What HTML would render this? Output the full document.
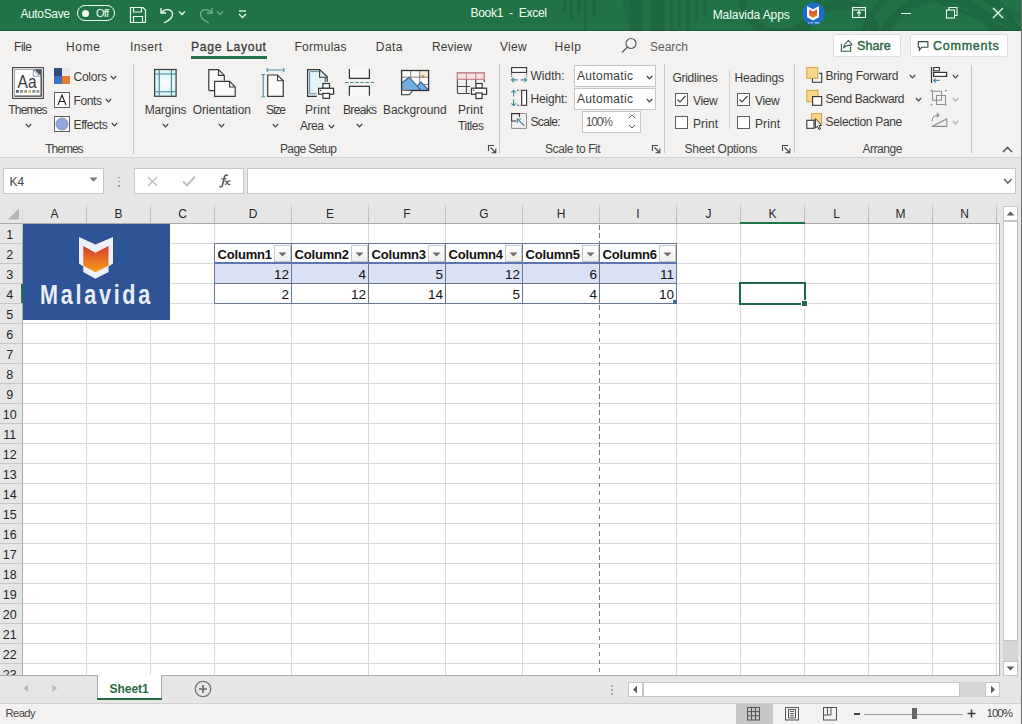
<!DOCTYPE html><html><head><meta charset="utf-8"><style>
html,body{margin:0;padding:0;width:1022px;height:724px;overflow:hidden;background:#fff;}
body{position:relative;font-family:"Liberation Sans",sans-serif;}
.t{position:absolute;white-space:nowrap;line-height:1;}
svg{overflow:visible;}
</style></head><body>
<div style="position:absolute;left:0px;top:0px;width:1022px;height:31px;background:#217346;"></div>
<div style="position:absolute;left:0px;top:30px;width:1022px;height:1px;background:#1f5e3c;"></div>
<svg style="position:absolute;left:540px;top:0px;" width="482" height="31" viewBox="0 0 482 31"><g fill="#000" opacity="0.09">
<rect x="23" y="0" width="3" height="13"/><rect x="30" y="0" width="3" height="19"/><rect x="37" y="0" width="4" height="14"/>
<rect x="44" y="0" width="3" height="31"/><rect x="52" y="0" width="4" height="17"/>
<path d="M82 0 H88 L103 27 V31 H90 Z" opacity="0.6"/>
<rect x="90" y="0" width="13" height="31"/><rect x="111" y="0" width="14" height="31"/>
<rect x="130" y="0" width="3" height="31"/><rect x="138" y="0" width="3" height="28"/><rect x="146" y="0" width="4" height="31"/>
<rect x="155" y="0" width="3" height="22"/><rect x="163" y="0" width="3" height="16"/>
</g>
<g fill="none" stroke="#000" opacity="0.08">
<circle cx="240" cy="-5" r="38" stroke-width="8"/>
<circle cx="300" cy="40" r="36" stroke-width="10"/>
<circle cx="400" cy="60" r="62" stroke-width="9"/>
<circle cx="400" cy="60" r="82" stroke-width="6"/>
<path d="M420 0 L482 31 M445 0 L482 18 M395 0 L470 31" stroke-width="4"/>
</g></svg>
<div class="t" style="left:20.40px;top:7.94px;font-size:12px;letter-spacing:-0.348px;color:#f0fff4;">AutoSave</div>
<div style="position:absolute;left:77px;top:5px;width:38px;height:16px;border:1.3px solid #eafff0;border-radius:9px;box-sizing:border-box;"></div>
<div style="position:absolute;left:81.5px;top:10px;width:7px;height:7px;background:#f4fff7;border-radius:50%;"></div>
<div class="t" style="left:96.00px;top:8.49px;font-size:11px;letter-spacing:-0.735px;color:#f0fff4;">Off</div>
<svg style="position:absolute;left:129px;top:6px;" width="18" height="18" viewBox="0 0 18 18"><g fill="none" stroke="#e8fbee" stroke-width="1.2"><path d="M1.5 1.5 H14 L16.5 4 V16.5 H1.5 Z"/><path d="M4.5 1.5 V6 H12.5 V1.5"/><path d="M4.5 16.5 V10.5 H13.5 V16.5"/></g></svg>
<svg style="position:absolute;left:158px;top:6px;" width="18" height="18" viewBox="0 0 18 18"><g fill="none" stroke="#e8fbee" stroke-width="1.3"><path d="M3 2 V7 H8"/><path d="M3.5 6.5 C7 2 14 3 14.5 8 C15 11 12 14 6 17"/></g></svg>
<svg style="position:absolute;left:178px;top:10px;" width="9" height="6" viewBox="0 0 9 6"><path d="M1 1.5 L4 4.5 L7 1.5" fill="none" stroke="#e8fbee" stroke-width="1.3"/></svg>
<svg style="position:absolute;left:197px;top:6px;" width="18" height="18" viewBox="0 0 18 18"><g fill="none" stroke="#6fae8a" stroke-width="1.3"><path d="M15 2 V7 H10"/><path d="M14.5 6.5 C11 2 4 3 3.5 8 C3 11 6 14 12 17"/></g></svg>
<svg style="position:absolute;left:216px;top:10px;" width="9" height="6" viewBox="0 0 9 6"><path d="M1 1.5 L4 4.5 L7 1.5" fill="none" stroke="#6fae8a" stroke-width="1.3"/></svg>
<svg style="position:absolute;left:237px;top:9px;" width="11" height="10" viewBox="0 0 11 10"><g fill="none" stroke="#e8fbee" stroke-width="1.3"><path d="M2 2 H9"/><path d="M2 5 L5.5 8.5 L9 5"/></g></svg>
<div class="t" style="left:470.50px;top:6.94px;font-size:12px;letter-spacing:-0.300px;color:#f0fff4;">Book1  -  Excel</div>
<div class="t" style="left:712.70px;top:8.94px;font-size:12px;letter-spacing:-0.079px;color:#f0fff4;">Malavida Apps</div>
<svg style="position:absolute;left:801px;top:2px;" width="25" height="25" viewBox="0 0 25 25"><defs><linearGradient id="ag" x1="0" y1="0" x2="0" y2="1"><stop offset="0" stop-color="#c9452a"/><stop offset="1" stop-color="#f08a25"/></linearGradient></defs>
<circle cx="12.5" cy="11.8" r="11.4" fill="#1e6cc4"/>
<path d="M6 4 L12 7.3 L18 4 V15.3 L12 18.6 L6 15.3 Z" fill="#f4f6fb"/>
<path d="M8.2 7.6 L12 9.8 L16 7.6 V13.6 L12 16 L8.2 13.6 Z" fill="url(#ag)"/>
<rect x="7" y="20.4" width="1.2" height="1" fill="#cfe3ff"/><rect x="9.5" y="20.4" width="2.5" height="1" fill="#cfe3ff"/><rect x="13.5" y="20.4" width="5" height="1" fill="#cfe3ff"/></svg>
<svg style="position:absolute;left:852px;top:7px;" width="15" height="12" viewBox="0 0 15 12"><g fill="none" stroke="#f0fff4" stroke-width="1.1"><rect x="0.5" y="0.5" width="13" height="10"/><path d="M0.5 3 H13.5"/><path d="M7 9.5 V4.5 M5 6.5 L7 4.5 L9 6.5"/></g></svg>
<div style="position:absolute;left:901px;top:13px;width:10px;height:1.2px;background:#f0fff4;"></div>
<svg style="position:absolute;left:946px;top:7px;" width="12" height="12" viewBox="0 0 12 12"><g fill="none" stroke="#f0fff4" stroke-width="1.1"><rect x="0.5" y="3" width="8" height="8"/><path d="M3 3 V0.5 H11 V8.5 H8.5"/></g></svg>
<svg style="position:absolute;left:992px;top:7px;" width="12" height="12" viewBox="0 0 12 12"><g stroke="#f0fff4" stroke-width="1.2"><path d="M1 1 L11 11 M11 1 L1 11"/></g></svg>
<div style="position:absolute;left:0px;top:31px;width:1022px;height:127px;background:#f3f2f1;"></div>
<div class="t" style="left:14.00px;top:40.64px;font-size:12px;letter-spacing:-0.445px;color:#3b3a39;">File</div>
<div class="t" style="left:66.00px;top:40.64px;font-size:12px;letter-spacing:0.663px;color:#3b3a39;">Home</div>
<div class="t" style="left:130.00px;top:40.64px;font-size:12px;letter-spacing:0.398px;color:#3b3a39;">Insert</div>
<div class="t" style="left:294.40px;top:40.64px;font-size:12px;letter-spacing:0.313px;color:#3b3a39;">Formulas</div>
<div class="t" style="left:375.80px;top:40.64px;font-size:12px;letter-spacing:0.451px;color:#3b3a39;">Data</div>
<div class="t" style="left:432.00px;top:40.64px;font-size:12px;letter-spacing:0.131px;color:#3b3a39;">Review</div>
<div class="t" style="left:500.00px;top:40.64px;font-size:12px;letter-spacing:0.269px;color:#3b3a39;">View</div>
<div class="t" style="left:554.60px;top:40.64px;font-size:12px;letter-spacing:0.573px;color:#3b3a39;">Help</div>
<div class="t" style="left:191.00px;top:40.97px;font-size:12.2px;letter-spacing:0.656px;color:#3b3a39;-webkit-text-stroke:0.3px #3b3a39;">Page Layout</div>
<div style="position:absolute;left:191px;top:56px;width:76px;height:3px;background:#28704a;"></div>
<svg style="position:absolute;left:620px;top:37px;" width="18" height="18" viewBox="0 0 18 18"><g fill="none" stroke="#605e5c" stroke-width="1.2"><circle cx="11" cy="6.5" r="5"/><path d="M7.5 10 L2 15.5"/></g></svg>
<div class="t" style="left:650.00px;top:40.64px;font-size:12px;letter-spacing:-0.004px;color:#605e5c;">Search</div>
<div style="position:absolute;left:833px;top:34px;width:68px;height:23px;background:#fff;border:1px solid #e1dfdd;border-radius:2px;box-sizing:border-box;"></div>
<svg style="position:absolute;left:836px;top:36px;" width="20" height="20" viewBox="0 0 20 20"><g fill="none" stroke="#2f5f45" stroke-width="1.1"><path d="M5.4 8 V15.3 H14.6 V11"/><path d="M7.6 11.5 C8.3 8.5 10 6.2 12.3 5.3 L12 4.2 L15.8 8.2 L14.3 9.8 L13.8 9.1 C11.5 9.3 9.5 9.8 7.6 11.5 Z"/></g></svg>
<div class="t" style="left:857.00px;top:40.42px;font-size:12.5px;letter-spacing:0.086px;color:#2b6a45;-webkit-text-stroke:0.45px #2b6a45;">Share</div>
<div style="position:absolute;left:910px;top:34px;width:98px;height:23px;background:#fff;border:1px solid #e1dfdd;border-radius:2px;box-sizing:border-box;"></div>
<svg style="position:absolute;left:912px;top:36px;" width="20" height="20" viewBox="0 0 20 20"><path d="M6.3 5.6 H15.9 V11.2 H9.8 L7.4 14.2 V11.2 H6.3 Z" fill="none" stroke="#2f4f3f" stroke-width="1.1"/></svg>
<div class="t" style="left:933.00px;top:40.42px;font-size:12.5px;letter-spacing:0.767px;color:#2b6a45;-webkit-text-stroke:0.45px #2b6a45;">Comments</div>
<div style="position:absolute;left:0px;top:157px;width:1022px;height:1px;background:#d6d4d2;"></div>
<div style="position:absolute;left:133px;top:64px;width:1px;height:90px;background:#c8c6c4;"></div>
<div style="position:absolute;left:499px;top:64px;width:1px;height:89px;background:#c8c6c4;"></div>
<div style="position:absolute;left:664px;top:64px;width:1px;height:89px;background:#c8c6c4;"></div>
<div style="position:absolute;left:794px;top:64px;width:1px;height:89px;background:#c8c6c4;"></div>
<div style="position:absolute;left:971px;top:65px;width:1px;height:88px;background:#c8c6c4;"></div>
<div style="position:absolute;left:729px;top:70px;width:1px;height:59px;background:#d2d0ce;"></div>
<div class="t" style="left:45.30px;top:142.64px;font-size:12px;letter-spacing:-1.010px;color:#444;">Themes</div>
<div class="t" style="left:280.00px;top:142.94px;font-size:12px;letter-spacing:-0.635px;color:#444;">Page Setup</div>
<div class="t" style="left:545.00px;top:142.94px;font-size:12px;letter-spacing:-0.393px;color:#444;">Scale to Fit</div>
<div class="t" style="left:684.60px;top:142.64px;font-size:12px;letter-spacing:-0.279px;color:#444;">Sheet Options</div>
<div class="t" style="left:862.40px;top:142.94px;font-size:12px;letter-spacing:-0.449px;color:#444;">Arrange</div>
<svg style="position:absolute;left:487.5px;top:144.5px;" width="9" height="9" viewBox="0 0 9 9"><g fill="none" stroke="#444" stroke-width="1.1"><path d="M0.5 6 V0.5 H6"/><path d="M2.5 2.5 L7.5 7.5 M3.5 7.8 H7.8 V3.5"/></g></svg>
<svg style="position:absolute;left:651.5px;top:144.5px;" width="9" height="9" viewBox="0 0 9 9"><g fill="none" stroke="#444" stroke-width="1.1"><path d="M0.5 6 V0.5 H6"/><path d="M2.5 2.5 L7.5 7.5 M3.5 7.8 H7.8 V3.5"/></g></svg>
<svg style="position:absolute;left:782px;top:144.5px;" width="9" height="9" viewBox="0 0 9 9"><g fill="none" stroke="#444" stroke-width="1.1"><path d="M0.5 6 V0.5 H6"/><path d="M2.5 2.5 L7.5 7.5 M3.5 7.8 H7.8 V3.5"/></g></svg>
<svg style="position:absolute;left:1002px;top:146px;" width="11" height="7" viewBox="0 0 11 7"><path d="M1 6 L5.5 1.5 L10 6" fill="none" stroke="#444" stroke-width="1.3"/></svg>
<svg style="position:absolute;left:12px;top:67px;" width="32" height="32" viewBox="0 0 32 32"><rect x="0.6" y="0.6" width="30.8" height="30.8" fill="#fff" stroke="#4a4a4a" stroke-width="1.2"/>
<path d="M2.6 29.5 V2.6 H29.4" fill="none" stroke="#9a9a9a" stroke-width="0.9"/>
<path d="M2.6 29.2 H29.2 V9" fill="none" stroke="#3a3a3a" stroke-width="1.3"/>
<path d="M22 2.2 H29.8 V10 Z" fill="#4b5568"/>
<path d="M21.4 3 V9.2 H27.4 Z" fill="#fff" stroke="#4b5568" stroke-width="0.6"/>
<text x="5.6" y="20.8" font-family="Liberation Sans" font-size="17.5" fill="#3b3a39" textLength="19" lengthAdjust="spacingAndGlyphs">Aa</text>
<rect x="4.0" y="23" width="2.8" height="2.8" fill="#4f5b86"/><rect x="8.1" y="23" width="2.8" height="2.8" fill="#9a8a74"/><rect x="12.2" y="23" width="2.8" height="2.8" fill="#a39b87"/><rect x="16.3" y="23" width="2.8" height="2.8" fill="#c9c07a"/><rect x="20.4" y="23" width="2.8" height="2.8" fill="#7f9590"/><rect x="24.5" y="23" width="2.8" height="2.8" fill="#93a08c"/></svg>
<div class="t" style="left:8.30px;top:104.04px;font-size:12px;letter-spacing:-0.810px;color:#3b3a39;">Themes</div>
<svg style="position:absolute;left:24.5px;top:123px;" width="7" height="5" viewBox="0 0 7 5"><path d="M0.8 1 L3.5 3.8 L6.2 1" fill="none" stroke="#444" stroke-width="1.2"/></svg>
<svg style="position:absolute;left:54px;top:68px;" width="16" height="16" viewBox="0 0 16 16"><rect x="0" y="0" width="8" height="8" fill="#2f4a7a"/><rect x="8" y="0" width="8" height="8" fill="#e8e8e8"/><rect x="0" y="8" width="8" height="8" fill="#3d72c0"/><rect x="8" y="8" width="8" height="8" fill="#e8782f"/></svg>
<div class="t" style="left:73.50px;top:71.14px;font-size:12px;letter-spacing:-0.235px;color:#3b3a39;">Colors</div>
<svg style="position:absolute;left:110px;top:74.5px;" width="7" height="5" viewBox="0 0 7 5"><path d="M0.8 1 L3.5 3.8 L6.2 1" fill="none" stroke="#444" stroke-width="1.2"/></svg>
<svg style="position:absolute;left:54px;top:92px;" width="16" height="16" viewBox="0 0 16 16"><rect x="0.5" y="0.5" width="15" height="15" fill="#fff" stroke="#605e5c"/><path d="M4 13 L8 3 L12 13 M5.5 9.5 H10.5" fill="none" stroke="#222" stroke-width="1.1"/></svg>
<div class="t" style="left:73.50px;top:95.04px;font-size:12px;letter-spacing:-0.378px;color:#3b3a39;">Fonts</div>
<svg style="position:absolute;left:105px;top:98px;" width="7" height="5" viewBox="0 0 7 5"><path d="M0.8 1 L3.5 3.8 L6.2 1" fill="none" stroke="#444" stroke-width="1.2"/></svg>
<svg style="position:absolute;left:54px;top:116px;" width="16" height="16" viewBox="0 0 16 16"><rect x="0.5" y="0.5" width="15" height="15" fill="#fff" stroke="#605e5c"/><circle cx="8" cy="8" r="6" fill="#8eaadb" stroke="#6f87b9" stroke-width="0.8"/></svg>
<div class="t" style="left:73.50px;top:118.74px;font-size:12px;letter-spacing:-0.377px;color:#3b3a39;">Effects</div>
<svg style="position:absolute;left:111px;top:121.5px;" width="7" height="5" viewBox="0 0 7 5"><path d="M0.8 1 L3.5 3.8 L6.2 1" fill="none" stroke="#444" stroke-width="1.2"/></svg>
<svg style="position:absolute;left:145px;top:62px;" width="150" height="40" viewBox="0 0 150 40"><defs><radialGradient id="mg" cx="0.5" cy="0.5" r="0.6"><stop offset="0" stop-color="#fbfdfd"/><stop offset="1" stop-color="#d6eff4"/></radialGradient></defs>
<rect x="9.6" y="7.5" width="21.5" height="26.8" fill="url(#mg)" stroke="#3a3a3a" stroke-width="1.2"/>
<path d="M14.2 8 V34 M26.4 8 V34 M10 12 H31 M10 29.7 H31" stroke="#3f8796" stroke-width="1.1"/>
<path d="M63.8 28.6 V7.6 H73.5 L79.3 13.4 V18.8" fill="#fafafa" stroke="#3a3a3a" stroke-width="1.2"/>
<path d="M73.5 7.6 V13.4 H79.3" fill="none" stroke="#3a3a3a" stroke-width="1.1"/>
<path d="M63.8 28.6 H69" stroke="#3a3a3a" stroke-width="1.2"/>
<path d="M69.6 34.3 V19.4 H84.6 L90.2 25 V34.3 Z" fill="#fafafa" stroke="#3a3a3a" stroke-width="1.2"/>
<path d="M84.6 19.4 V25 H90.2" fill="none" stroke="#3a3a3a" stroke-width="1.1"/>
<path d="M122.2 8 H138.8 M122.2 6 V10 M138.8 6 V10" stroke="#4a8f9e" stroke-width="1.1"/>
<path d="M118.2 12.5 V34.8 M116.2 12.5 H120.2 M116.2 34.8 H120.2" stroke="#4a8f9e" stroke-width="1.1"/>
<path d="M122.7 34.3 V13 H132.5 L138.3 18.8 V34.3 Z" fill="#fafafa" stroke="#3a3a3a" stroke-width="1.2"/>
<path d="M132.5 13 V18.8 H138.3" fill="none" stroke="#3a3a3a" stroke-width="1.1"/></svg>
<div class="t" style="left:144.70px;top:103.84px;font-size:12px;letter-spacing:-0.163px;color:#3b3a39;">Margins</div>
<svg style="position:absolute;left:162px;top:123px;" width="7" height="5" viewBox="0 0 7 5"><path d="M0.8 1 L3.5 3.8 L6.2 1" fill="none" stroke="#444" stroke-width="1.2"/></svg>
<div class="t" style="left:192.80px;top:103.84px;font-size:12px;letter-spacing:-0.050px;color:#3b3a39;">Orientation</div>
<svg style="position:absolute;left:218px;top:123px;" width="7" height="5" viewBox="0 0 7 5"><path d="M0.8 1 L3.5 3.8 L6.2 1" fill="none" stroke="#444" stroke-width="1.2"/></svg>
<div class="t" style="left:266.00px;top:103.84px;font-size:12px;letter-spacing:-1.115px;color:#3b3a39;">Size</div>
<svg style="position:absolute;left:271.5px;top:123px;" width="7" height="5" viewBox="0 0 7 5"><path d="M0.8 1 L3.5 3.8 L6.2 1" fill="none" stroke="#444" stroke-width="1.2"/></svg>
<svg style="position:absolute;left:300px;top:62px;" width="80" height="40" viewBox="0 0 80 40"><path d="M8 34 V8 H19.4 L27 15.3 V32 H8 Z" fill="#e4f3f8" stroke="none"/>
<path d="M16.8 34.4 H7.6 V7.6 H19.6 L27.2 14.8 V19.8" fill="none" stroke="#333" stroke-width="1.2"/>
<path d="M16.4 31.8 H9.6 V9.6 H18.8" fill="none" stroke="#5d8ea3" stroke-width="1"/>
<path d="M19.6 7.8 V15.3 H27" fill="none" stroke="#333" stroke-width="1.1"/>
<path d="M25.2 15.8 V20" stroke="#333" stroke-width="0.9"/>
<rect x="22.9" y="21.5" width="6.6" height="4.8" fill="#fff" stroke="#333" stroke-width="1.2"/>
<rect x="18.6" y="26.3" width="15" height="5.9" fill="#fff" stroke="#333" stroke-width="1.2"/>
<rect x="22.9" y="31.4" width="6.6" height="4.9" fill="#fff" stroke="#333" stroke-width="1.2"/>
<rect x="20" y="27.8" width="1.2" height="1.2" fill="#333"/>
<path d="M49.4 7 V16.4 H69.4 V7" fill="#f7f7f7" stroke="#333" stroke-width="1.2"/>
<path d="M45 20.5 H74" stroke="#4a8f9e" stroke-width="1.2" stroke-dasharray="3.5 1.6"/>
<path d="M49.4 33.8 V24.4 H69.4 V33.8" fill="#f7f7f7" stroke="#333" stroke-width="1.2"/></svg>
<div class="t" style="left:305.00px;top:103.94px;font-size:12px;letter-spacing:0.082px;color:#3b3a39;">Print</div>
<div class="t" style="left:300.00px;top:120.14px;font-size:12px;letter-spacing:-0.449px;color:#3b3a39;">Area</div>
<svg style="position:absolute;left:327.5px;top:124px;" width="7" height="5" viewBox="0 0 7 5"><path d="M0.8 1 L3.5 3.8 L6.2 1" fill="none" stroke="#444" stroke-width="1.2"/></svg>
<div class="t" style="left:343.00px;top:103.94px;font-size:12px;letter-spacing:-0.670px;color:#3b3a39;">Breaks</div>
<svg style="position:absolute;left:356px;top:123px;" width="7" height="5" viewBox="0 0 7 5"><path d="M0.8 1 L3.5 3.8 L6.2 1" fill="none" stroke="#444" stroke-width="1.2"/></svg>
<svg style="position:absolute;left:395px;top:62px;" width="100" height="40" viewBox="0 0 100 40"><rect x="6.4" y="8.3" width="27.4" height="20.3" fill="#fdfdfd" stroke="none"/>
<rect x="24.7" y="8.3" width="9.1" height="6.9" fill="#f6ead6"/>
<path d="M7 15.2 H33.5 M15.7 8.5 V15.2 M24.7 8.5 V28 M24.7 22.5 H33.5" stroke="#777" stroke-width="0.9"/>
<circle cx="27.9" cy="14.7" r="1.6" fill="#b8925a"/>
<path d="M6.8 21 L14.2 15.2 L25.9 28.4 H6.8 Z" fill="#74aee0"/>
<path d="M22 24 L25.9 20 L32.8 27 V28.4 H25.9 Z" fill="#74aee0"/>
<path d="M6.8 21 L14.2 15.2 L25.9 28.4 M22.5 23.6 L25.9 20 L33.4 27.8" fill="none" stroke="#2f5f8a" stroke-width="1.1"/>
<rect x="6.6" y="8.5" width="27" height="20" fill="none" stroke="#333" stroke-width="1.3"/>
<path d="M6.6 28.6 V32.8 H14.3 L17.2 29" fill="#fff" stroke="#333" stroke-width="1.1"/>
<rect x="62.4" y="10.6" width="27" height="6.9" fill="#f9dfe0"/>
<path d="M62.4 31.5 V10.6 H89.4 V20" fill="none" stroke="#444" stroke-width="1.1"/>
<path d="M62.4 10.6 H89.4 V17.4 H62.4 Z M71.4 10.6 V17.4 M80.7 10.6 V17.4" fill="none" stroke="#c98b8f" stroke-width="1.1"/>
<path d="M62.4 31.5 H75 M62.4 24.5 H75 M71.4 17.4 V31.5 M80.7 17.4 V21" fill="none" stroke="#444" stroke-width="1.1"/>
<rect x="80.9" y="21.5" width="6.2" height="4.7" fill="#fff" stroke="#333" stroke-width="1.2"/>
<rect x="76.5" y="26.2" width="15.1" height="6.1" fill="#fff" stroke="#333" stroke-width="1.2"/>
<rect x="80.9" y="31" width="6.2" height="5.5" fill="#fff" stroke="#333" stroke-width="1.2"/>
<rect x="78" y="27.8" width="1.2" height="1.2" fill="#333"/></svg>
<div class="t" style="left:383.00px;top:103.94px;font-size:12px;letter-spacing:-0.049px;color:#3b3a39;">Background</div>
<div class="t" style="left:458.00px;top:103.94px;font-size:12px;letter-spacing:0.082px;color:#3b3a39;">Print</div>
<div class="t" style="left:458.00px;top:120.14px;font-size:12px;letter-spacing:-0.445px;color:#3b3a39;">Titles</div>
<svg style="position:absolute;left:506px;top:62px;" width="26" height="70" viewBox="0 0 26 70"><rect x="5.6" y="5.6" width="15" height="4.8" fill="#fff" stroke="#333" stroke-width="1.1"/>
<path d="M5.6 11.5 V15 M20.6 11.5 V15" stroke="#333" stroke-width="1" stroke-dasharray="1.6 1.2"/>
<path d="M5.5 17.9 H11.5 M7.8 15.6 L5.5 17.9 L7.8 20.2 M14.7 17.9 H20.7 M18.4 15.6 L20.7 17.9 L18.4 20.2" fill="none" stroke="#4a8a9e" stroke-width="1.1"/></svg>
<div class="t" style="left:530.50px;top:70.14px;font-size:12px;letter-spacing:-0.002px;color:#3b3a39;">Width:</div>
<svg style="position:absolute;left:506px;top:62px;" width="26" height="70" viewBox="0 0 26 70"><rect x="15.7" y="28.3" width="4.9" height="15" fill="#fff" stroke="#333" stroke-width="1.1"/>
<path d="M11 28.3 H14.5 M11 43.3 H14.5" stroke="#333" stroke-width="1" stroke-dasharray="1.6 1.2"/>
<path d="M7.6 28.4 V34.6 M5.3 30.7 L7.6 28.4 L9.9 30.7 M7.6 37.6 V43.6 M5.3 41.3 L7.6 43.6 L9.9 41.3" fill="none" stroke="#4a8a9e" stroke-width="1.1"/></svg>
<div class="t" style="left:530.50px;top:93.14px;font-size:12px;letter-spacing:-0.170px;color:#3b3a39;">Height:</div>
<svg style="position:absolute;left:506px;top:62px;" width="26" height="70" viewBox="0 0 26 70"><path d="M13.5 51.6 H20.5 V66.4 H5.6 V59" fill="none" stroke="#8a8a8a" stroke-width="1"/>
<path d="M5.6 59 V51.6 H13.5 V55" fill="none" stroke="#333" stroke-width="1.1"/><path d="M5.6 59 H10" stroke="#333" stroke-width="1.1"/>
<path d="M18.4 63.8 L11.3 57 M11.2 61 V57 H15.2" fill="none" stroke="#4a8a9e" stroke-width="1.2"/></svg>
<div class="t" style="left:530.50px;top:115.84px;font-size:12px;letter-spacing:-0.670px;color:#3b3a39;">Scale:</div>
<div style="position:absolute;left:574px;top:65px;width:82px;height:22px;background:#fff;border:1px solid #c8c6c4;box-sizing:border-box;"></div>
<div class="t" style="left:577.00px;top:70.14px;font-size:12px;letter-spacing:0.331px;color:#3b3a39;">Automatic</div>
<svg style="position:absolute;left:646px;top:75px;" width="7" height="5" viewBox="0 0 7 5"><path d="M0.8 1 L3.5 3.8 L6.2 1" fill="none" stroke="#444" stroke-width="1.2"/></svg>
<div style="position:absolute;left:574px;top:88px;width:82px;height:22px;background:#fff;border:1px solid #c8c6c4;box-sizing:border-box;"></div>
<div class="t" style="left:577.00px;top:93.14px;font-size:12px;letter-spacing:0.331px;color:#3b3a39;">Automatic</div>
<svg style="position:absolute;left:646px;top:98px;" width="7" height="5" viewBox="0 0 7 5"><path d="M0.8 1 L3.5 3.8 L6.2 1" fill="none" stroke="#444" stroke-width="1.2"/></svg>
<div style="position:absolute;left:582px;top:111px;width:59px;height:22px;background:#fff;border:1px solid #c8c6c4;box-sizing:border-box;"></div>
<div class="t" style="left:585.70px;top:115.84px;font-size:12px;letter-spacing:-1.130px;color:#555;">100%</div>
<svg style="position:absolute;left:628px;top:113px;" width="8" height="17" viewBox="0 0 8 17"><path d="M1 5 L4 2 L7 5 M1 12 L4 15 L7 12" fill="none" stroke="#605e5c" stroke-width="1"/></svg>
<div class="t" style="left:672.40px;top:71.54px;font-size:12px;letter-spacing:-0.256px;color:#3b3a39;">Gridlines</div>
<div class="t" style="left:734.60px;top:71.54px;font-size:12px;letter-spacing:-0.186px;color:#3b3a39;">Headings</div>
<svg style="position:absolute;left:675px;top:93px;" width="13" height="13" viewBox="0 0 13 13"><rect x="0.5" y="0.5" width="12" height="12" fill="#fff" stroke="#605e5c"/><path d="M2.5 6.5 L5 9 L10.5 3" fill="none" stroke="#444" stroke-width="1.2"/></svg>
<svg style="position:absolute;left:675px;top:116px;" width="13" height="13" viewBox="0 0 13 13"><rect x="0.5" y="0.5" width="12" height="12" fill="#fff" stroke="#605e5c"/></svg>
<svg style="position:absolute;left:737px;top:93px;" width="13" height="13" viewBox="0 0 13 13"><rect x="0.5" y="0.5" width="12" height="12" fill="#fff" stroke="#605e5c"/><path d="M2.5 6.5 L5 9 L10.5 3" fill="none" stroke="#444" stroke-width="1.2"/></svg>
<svg style="position:absolute;left:737px;top:116px;" width="13" height="13" viewBox="0 0 13 13"><rect x="0.5" y="0.5" width="12" height="12" fill="#fff" stroke="#605e5c"/></svg>
<div class="t" style="left:693.00px;top:94.64px;font-size:12px;letter-spacing:-0.364px;color:#3b3a39;">View</div>
<div class="t" style="left:693.00px;top:117.84px;font-size:12px;letter-spacing:0.082px;color:#3b3a39;">Print</div>
<div class="t" style="left:755.00px;top:94.64px;font-size:12px;letter-spacing:-0.364px;color:#3b3a39;">View</div>
<div class="t" style="left:755.00px;top:117.84px;font-size:12px;letter-spacing:0.082px;color:#3b3a39;">Print</div>
<svg style="position:absolute;left:802px;top:62px;" width="26" height="70" viewBox="0 0 26 70"><rect x="4.8" y="5.6" width="11" height="10.6" fill="#f9d58a" stroke="#d5a04a" stroke-width="1"/>
<path d="M17.2 11.4 H19.7 V20.2 H10.4 V16.6" fill="none" stroke="#333" stroke-width="1.1"/>
<rect x="4.8" y="28.4" width="11.2" height="11.4" fill="#f9d58a" stroke="#d5a04a" stroke-width="1"/>
<rect x="10.6" y="34.6" width="9.1" height="8.7" fill="#fff" stroke="#333" stroke-width="1.1"/>
<rect x="9.6" y="51.6" width="10" height="10.2" fill="#f9d58a" stroke="#d5a04a" stroke-width="1"/>
<rect x="4.8" y="58.3" width="7.2" height="8" fill="#fff" stroke="#333" stroke-width="1.1"/>
<path d="M13.4 56.6 V66.2 L15.4 64.2 L17 67.6 L18.5 66.9 L17 63.6 L19.6 63.4 Z" fill="#fff" stroke="#333" stroke-width="1"/></svg>
<div class="t" style="left:825.50px;top:70.14px;font-size:12px;letter-spacing:-0.196px;color:#3b3a39;">Bring Forward</div>
<svg style="position:absolute;left:909px;top:74px;" width="7" height="5" viewBox="0 0 7 5"><path d="M0.8 1 L3.5 3.8 L6.2 1" fill="none" stroke="#444" stroke-width="1.2"/></svg>
<div class="t" style="left:825.50px;top:93.14px;font-size:12px;letter-spacing:-0.421px;color:#3b3a39;">Send Backward</div>
<svg style="position:absolute;left:914.5px;top:97px;" width="7" height="5" viewBox="0 0 7 5"><path d="M0.8 1 L3.5 3.8 L6.2 1" fill="none" stroke="#444" stroke-width="1.2"/></svg>
<div class="t" style="left:825.50px;top:115.84px;font-size:12px;letter-spacing:-0.302px;color:#3b3a39;">Selection Pane</div>
<svg style="position:absolute;left:926px;top:62px;" width="36" height="70" viewBox="0 0 36 70"><path d="M5.5 5 V21" stroke="#333" stroke-width="1.2"/>
<rect x="7.6" y="5.6" width="5.8" height="3.2" fill="#fff" stroke="#333" stroke-width="1.1"/>
<rect x="7.6" y="10.4" width="13" height="4" fill="#fff" stroke="#333" stroke-width="1.2"/>
<path d="M13.6 18.4 H7.6 M9.8 16.3 L7.6 18.4 L9.8 20.5" fill="none" stroke="#4a8a9e" stroke-width="1.1"/>
<g fill="none" stroke="#8f8d8b" stroke-width="1"><rect x="6.5" y="29.2" width="9" height="9"/><rect x="10.5" y="33.5" width="9" height="9"/></g>
<g fill="#8f8d8b"><rect x="4.6" y="27.8" width="1.6" height="1.6"/><rect x="19" y="27.8" width="1.6" height="1.6"/><rect x="4.6" y="41.9" width="1.6" height="1.6"/><rect x="19" y="41.9" width="1.6" height="1.6"/></g>
<g fill="none" stroke="#8f8d8b" stroke-width="1.1"><path d="M5.8 64.4 H20.8 V57 Z"/><path d="M6.3 59.2 C6 55.5 8.5 53 12.2 53.2 M10.8 51 L13 53.2 L10.8 55.4"/></g></svg>
<svg style="position:absolute;left:951.5px;top:74px;" width="7" height="5" viewBox="0 0 7 5"><path d="M0.8 1 L3.5 3.8 L6.2 1" fill="none" stroke="#444" stroke-width="1.2"/></svg>
<svg style="position:absolute;left:951.5px;top:97px;" width="7" height="5" viewBox="0 0 7 5"><path d="M0.8 1 L3.5 3.8 L6.2 1" fill="none" stroke="#b3b0ad" stroke-width="1.2"/></svg>
<svg style="position:absolute;left:951.5px;top:120px;" width="7" height="5" viewBox="0 0 7 5"><path d="M0.8 1 L3.5 3.8 L6.2 1" fill="none" stroke="#b3b0ad" stroke-width="1.2"/></svg>
<div style="position:absolute;left:0px;top:158px;width:1022px;height:45px;background:#e6e6e6;"></div>
<div style="position:absolute;left:3px;top:168px;width:101px;height:26px;background:#fff;border:1px solid #c8c6c4;box-sizing:border-box;"></div>
<div class="t" style="left:9.60px;top:175.54px;font-size:12px;letter-spacing:0.000px;color:#444;">K4</div>
<svg style="position:absolute;left:89px;top:177px;" width="10" height="6" viewBox="0 0 10 6"><path d="M0.5 0.5 H8.5 L4.5 4.8 Z" fill="#777"/></svg>
<div style="position:absolute;left:118.3px;top:176.5px;width:1.6px;height:1.6px;background:#9a9a9a;"></div>
<div style="position:absolute;left:118.3px;top:180.8px;width:1.6px;height:1.6px;background:#9a9a9a;"></div>
<div style="position:absolute;left:118.3px;top:185px;width:1.6px;height:1.6px;background:#9a9a9a;"></div>
<div style="position:absolute;left:134px;top:168px;width:110px;height:26px;background:#fff;border:1px solid #c8c6c4;box-sizing:border-box;"></div>
<svg style="position:absolute;left:147px;top:176px;" width="11" height="11" viewBox="0 0 11 11"><path d="M1 1 L10 10 M10 1 L1 10" stroke="#bdbdbd" stroke-width="1.3"/></svg>
<svg style="position:absolute;left:182px;top:175px;" width="14" height="12" viewBox="0 0 14 12"><path d="M1 6.5 L5 10.5 L13 1.5" fill="none" stroke="#c0c0c0" stroke-width="2"/></svg>
<svg style="position:absolute;left:212px;top:170px;" width="26" height="22" viewBox="0 0 26 22"><path d="M15.8 5.6 C14.8 4.6 13 5 12.4 7 L10.4 15.5 C9.8 17.2 8.6 17.4 7.6 16.4" fill="none" stroke="#555" stroke-width="1.5"/><path d="M9.5 8.8 H14.3" stroke="#555" stroke-width="1.2"/><path d="M12.8 14.5 C14 14.6 14.5 14 15.2 12.5 C15.8 11.2 16.6 10.8 18.6 11 M12.6 11.2 C14.3 10.8 15 11.4 15.5 13 C16 14.4 16.8 14.8 18.2 14.4" fill="none" stroke="#555" stroke-width="1.2"/></svg>
<div style="position:absolute;left:247px;top:168px;width:769px;height:26px;background:#fff;border:1px solid #c8c6c4;box-sizing:border-box;"></div>
<svg style="position:absolute;left:1003px;top:178px;" width="10" height="7" viewBox="0 0 10 7"><path d="M1 1 L4.8 5 L8.6 1" fill="none" stroke="#666" stroke-width="1.6"/></svg>
<div style="position:absolute;left:1021px;top:0px;width:1px;height:724px;background:#6b6b6b;"></div>
<div style="position:absolute;left:0px;top:203px;width:1000px;height:21px;background:#e6e6e6;"></div>
<div style="position:absolute;left:0px;top:224px;width:22px;height:452px;background:#e6e6e6;"></div>
<div style="position:absolute;left:23px;top:224px;width:977px;height:451px;background:#fff;"></div>
<div style="position:absolute;left:86px;top:224px;width:1px;height:451px;background:#d9d9d9;"></div>
<div style="position:absolute;left:150px;top:224px;width:1px;height:451px;background:#d9d9d9;"></div>
<div style="position:absolute;left:214px;top:224px;width:1px;height:451px;background:#d9d9d9;"></div>
<div style="position:absolute;left:291px;top:224px;width:1px;height:451px;background:#d9d9d9;"></div>
<div style="position:absolute;left:368px;top:224px;width:1px;height:451px;background:#d9d9d9;"></div>
<div style="position:absolute;left:445px;top:224px;width:1px;height:451px;background:#d9d9d9;"></div>
<div style="position:absolute;left:522px;top:224px;width:1px;height:451px;background:#d9d9d9;"></div>
<div style="position:absolute;left:599px;top:224px;width:1px;height:451px;background:#d9d9d9;"></div>
<div style="position:absolute;left:676px;top:224px;width:1px;height:451px;background:#d9d9d9;"></div>
<div style="position:absolute;left:740px;top:224px;width:1px;height:451px;background:#d9d9d9;"></div>
<div style="position:absolute;left:804px;top:224px;width:1px;height:451px;background:#d9d9d9;"></div>
<div style="position:absolute;left:868px;top:224px;width:1px;height:451px;background:#d9d9d9;"></div>
<div style="position:absolute;left:932px;top:224px;width:1px;height:451px;background:#d9d9d9;"></div>
<div style="position:absolute;left:996px;top:224px;width:1px;height:451px;background:#d9d9d9;"></div>
<div style="position:absolute;left:23px;top:243px;width:976px;height:1px;background:#d9d9d9;"></div>
<div style="position:absolute;left:23px;top:263px;width:976px;height:1px;background:#d9d9d9;"></div>
<div style="position:absolute;left:23px;top:283px;width:976px;height:1px;background:#d9d9d9;"></div>
<div style="position:absolute;left:23px;top:303px;width:976px;height:1px;background:#d9d9d9;"></div>
<div style="position:absolute;left:23px;top:323px;width:976px;height:1px;background:#d9d9d9;"></div>
<div style="position:absolute;left:23px;top:343px;width:976px;height:1px;background:#d9d9d9;"></div>
<div style="position:absolute;left:23px;top:363px;width:976px;height:1px;background:#d9d9d9;"></div>
<div style="position:absolute;left:23px;top:383px;width:976px;height:1px;background:#d9d9d9;"></div>
<div style="position:absolute;left:23px;top:403px;width:976px;height:1px;background:#d9d9d9;"></div>
<div style="position:absolute;left:23px;top:423px;width:976px;height:1px;background:#d9d9d9;"></div>
<div style="position:absolute;left:23px;top:443px;width:976px;height:1px;background:#d9d9d9;"></div>
<div style="position:absolute;left:23px;top:463px;width:976px;height:1px;background:#d9d9d9;"></div>
<div style="position:absolute;left:23px;top:483px;width:976px;height:1px;background:#d9d9d9;"></div>
<div style="position:absolute;left:23px;top:503px;width:976px;height:1px;background:#d9d9d9;"></div>
<div style="position:absolute;left:23px;top:523px;width:976px;height:1px;background:#d9d9d9;"></div>
<div style="position:absolute;left:23px;top:543px;width:976px;height:1px;background:#d9d9d9;"></div>
<div style="position:absolute;left:23px;top:563px;width:976px;height:1px;background:#d9d9d9;"></div>
<div style="position:absolute;left:23px;top:583px;width:976px;height:1px;background:#d9d9d9;"></div>
<div style="position:absolute;left:23px;top:603px;width:976px;height:1px;background:#d9d9d9;"></div>
<div style="position:absolute;left:23px;top:623px;width:976px;height:1px;background:#d9d9d9;"></div>
<div style="position:absolute;left:23px;top:643px;width:976px;height:1px;background:#d9d9d9;"></div>
<div style="position:absolute;left:23px;top:663px;width:976px;height:1px;background:#d9d9d9;"></div>
<div style="position:absolute;left:22px;top:201px;width:1px;height:22px;background:linear-gradient(#e6e6e6,#c2c2c2 40%,#b8b8b8);"></div>
<div style="position:absolute;left:86px;top:201px;width:1px;height:22px;background:linear-gradient(#e6e6e6,#c2c2c2 40%,#b8b8b8);"></div>
<div style="position:absolute;left:150px;top:201px;width:1px;height:22px;background:linear-gradient(#e6e6e6,#c2c2c2 40%,#b8b8b8);"></div>
<div style="position:absolute;left:214px;top:201px;width:1px;height:22px;background:linear-gradient(#e6e6e6,#c2c2c2 40%,#b8b8b8);"></div>
<div style="position:absolute;left:291px;top:201px;width:1px;height:22px;background:linear-gradient(#e6e6e6,#c2c2c2 40%,#b8b8b8);"></div>
<div style="position:absolute;left:368px;top:201px;width:1px;height:22px;background:linear-gradient(#e6e6e6,#c2c2c2 40%,#b8b8b8);"></div>
<div style="position:absolute;left:445px;top:201px;width:1px;height:22px;background:linear-gradient(#e6e6e6,#c2c2c2 40%,#b8b8b8);"></div>
<div style="position:absolute;left:522px;top:201px;width:1px;height:22px;background:linear-gradient(#e6e6e6,#c2c2c2 40%,#b8b8b8);"></div>
<div style="position:absolute;left:599px;top:201px;width:1px;height:22px;background:linear-gradient(#e6e6e6,#c2c2c2 40%,#b8b8b8);"></div>
<div style="position:absolute;left:676px;top:201px;width:1px;height:22px;background:linear-gradient(#e6e6e6,#c2c2c2 40%,#b8b8b8);"></div>
<div style="position:absolute;left:740px;top:201px;width:1px;height:22px;background:linear-gradient(#e6e6e6,#c2c2c2 40%,#b8b8b8);"></div>
<div style="position:absolute;left:804px;top:201px;width:1px;height:22px;background:linear-gradient(#e6e6e6,#c2c2c2 40%,#b8b8b8);"></div>
<div style="position:absolute;left:868px;top:201px;width:1px;height:22px;background:linear-gradient(#e6e6e6,#c2c2c2 40%,#b8b8b8);"></div>
<div style="position:absolute;left:932px;top:201px;width:1px;height:22px;background:linear-gradient(#e6e6e6,#c2c2c2 40%,#b8b8b8);"></div>
<div style="position:absolute;left:996px;top:201px;width:1px;height:22px;background:linear-gradient(#e6e6e6,#c2c2c2 40%,#b8b8b8);"></div>
<div style="position:absolute;left:0px;top:243px;width:22px;height:1px;background:#c6c6c6;"></div>
<div style="position:absolute;left:0px;top:263px;width:22px;height:1px;background:#c6c6c6;"></div>
<div style="position:absolute;left:0px;top:283px;width:22px;height:1px;background:#c6c6c6;"></div>
<div style="position:absolute;left:0px;top:303px;width:22px;height:1px;background:#c6c6c6;"></div>
<div style="position:absolute;left:0px;top:323px;width:22px;height:1px;background:#c6c6c6;"></div>
<div style="position:absolute;left:0px;top:343px;width:22px;height:1px;background:#c6c6c6;"></div>
<div style="position:absolute;left:0px;top:363px;width:22px;height:1px;background:#c6c6c6;"></div>
<div style="position:absolute;left:0px;top:383px;width:22px;height:1px;background:#c6c6c6;"></div>
<div style="position:absolute;left:0px;top:403px;width:22px;height:1px;background:#c6c6c6;"></div>
<div style="position:absolute;left:0px;top:423px;width:22px;height:1px;background:#c6c6c6;"></div>
<div style="position:absolute;left:0px;top:443px;width:22px;height:1px;background:#c6c6c6;"></div>
<div style="position:absolute;left:0px;top:463px;width:22px;height:1px;background:#c6c6c6;"></div>
<div style="position:absolute;left:0px;top:483px;width:22px;height:1px;background:#c6c6c6;"></div>
<div style="position:absolute;left:0px;top:503px;width:22px;height:1px;background:#c6c6c6;"></div>
<div style="position:absolute;left:0px;top:523px;width:22px;height:1px;background:#c6c6c6;"></div>
<div style="position:absolute;left:0px;top:543px;width:22px;height:1px;background:#c6c6c6;"></div>
<div style="position:absolute;left:0px;top:563px;width:22px;height:1px;background:#c6c6c6;"></div>
<div style="position:absolute;left:0px;top:583px;width:22px;height:1px;background:#c6c6c6;"></div>
<div style="position:absolute;left:0px;top:603px;width:22px;height:1px;background:#c6c6c6;"></div>
<div style="position:absolute;left:0px;top:623px;width:22px;height:1px;background:#c6c6c6;"></div>
<div style="position:absolute;left:0px;top:643px;width:22px;height:1px;background:#c6c6c6;"></div>
<div style="position:absolute;left:0px;top:663px;width:22px;height:1px;background:#c6c6c6;"></div>
<div style="position:absolute;left:0px;top:683px;width:22px;height:1px;background:#c6c6c6;"></div>
<div style="position:absolute;left:0px;top:223px;width:999px;height:1px;background:#ababab;"></div>
<div style="position:absolute;left:22px;top:201px;width:1px;height:474px;background:linear-gradient(#e6e6e6,#ababab 10%);"></div>
<div style="position:absolute;left:999px;top:223px;width:1px;height:453px;background:#ababab;"></div>
<div style="position:absolute;left:0px;top:675px;width:1000px;height:1px;background:#ababab;"></div>
<svg style="position:absolute;left:7px;top:207px;" width="13" height="13" viewBox="0 0 13 13"><path d="M12 1.5 V12.5 H1 Z" fill="#b4b4b4"/></svg>
<div class="t" style="left:50.50px;top:207.74px;font-size:12px;letter-spacing:0.000px;color:#262626;">A</div>
<div class="t" style="left:114.50px;top:207.74px;font-size:12px;letter-spacing:0.000px;color:#262626;">B</div>
<div class="t" style="left:178.17px;top:207.74px;font-size:12px;letter-spacing:0.000px;color:#262626;">C</div>
<div class="t" style="left:248.67px;top:207.74px;font-size:12px;letter-spacing:0.000px;color:#262626;">D</div>
<div class="t" style="left:326.00px;top:207.74px;font-size:12px;letter-spacing:0.000px;color:#262626;">E</div>
<div class="t" style="left:403.33px;top:207.74px;font-size:12px;letter-spacing:0.000px;color:#262626;">F</div>
<div class="t" style="left:479.33px;top:207.74px;font-size:12px;letter-spacing:0.000px;color:#262626;">G</div>
<div class="t" style="left:556.67px;top:207.74px;font-size:12px;letter-spacing:0.000px;color:#262626;">H</div>
<div class="t" style="left:636.33px;top:207.74px;font-size:12px;letter-spacing:0.000px;color:#262626;">I</div>
<div class="t" style="left:705.50px;top:207.74px;font-size:12px;letter-spacing:0.000px;color:#262626;">J</div>
<div class="t" style="left:768.50px;top:207.74px;font-size:12px;letter-spacing:0.000px;color:#262626;">K</div>
<div class="t" style="left:833.16px;top:207.74px;font-size:12px;letter-spacing:0.000px;color:#262626;">L</div>
<div class="t" style="left:895.50px;top:207.74px;font-size:12px;letter-spacing:0.000px;color:#262626;">M</div>
<div class="t" style="left:960.17px;top:207.74px;font-size:12px;letter-spacing:0.000px;color:#262626;">N</div>
<div style="position:absolute;left:740px;top:222px;width:65px;height:2px;background:#217346;"></div>
<div style="position:absolute;left:0;top:224px;width:22px;height:451px;overflow:hidden;">
<div class="t" style="left:6.32px;top:4.72px;font-size:12.5px;letter-spacing:0.000px;color:#262626;">1</div>
<div class="t" style="left:6.32px;top:24.72px;font-size:12.5px;letter-spacing:0.000px;color:#262626;">2</div>
<div class="t" style="left:6.32px;top:44.72px;font-size:12.5px;letter-spacing:0.000px;color:#262626;">3</div>
<div class="t" style="left:6.32px;top:64.72px;font-size:12.5px;letter-spacing:0.000px;color:#262626;">4</div>
<div class="t" style="left:6.32px;top:84.72px;font-size:12.5px;letter-spacing:0.000px;color:#262626;">5</div>
<div class="t" style="left:6.32px;top:104.72px;font-size:12.5px;letter-spacing:0.000px;color:#262626;">6</div>
<div class="t" style="left:6.32px;top:124.72px;font-size:12.5px;letter-spacing:0.000px;color:#262626;">7</div>
<div class="t" style="left:6.32px;top:144.72px;font-size:12.5px;letter-spacing:0.000px;color:#262626;">8</div>
<div class="t" style="left:6.32px;top:164.72px;font-size:12.5px;letter-spacing:0.000px;color:#262626;">9</div>
<div class="t" style="left:2.85px;top:184.72px;font-size:12.5px;letter-spacing:0.000px;color:#262626;">10</div>
<div class="t" style="left:3.31px;top:204.72px;font-size:12.5px;letter-spacing:0.000px;color:#262626;">11</div>
<div class="t" style="left:2.85px;top:224.72px;font-size:12.5px;letter-spacing:0.000px;color:#262626;">12</div>
<div class="t" style="left:2.85px;top:244.72px;font-size:12.5px;letter-spacing:0.000px;color:#262626;">13</div>
<div class="t" style="left:2.85px;top:264.72px;font-size:12.5px;letter-spacing:0.000px;color:#262626;">14</div>
<div class="t" style="left:2.85px;top:284.72px;font-size:12.5px;letter-spacing:0.000px;color:#262626;">15</div>
<div class="t" style="left:2.85px;top:304.72px;font-size:12.5px;letter-spacing:0.000px;color:#262626;">16</div>
<div class="t" style="left:2.85px;top:324.72px;font-size:12.5px;letter-spacing:0.000px;color:#262626;">17</div>
<div class="t" style="left:2.85px;top:344.72px;font-size:12.5px;letter-spacing:0.000px;color:#262626;">18</div>
<div class="t" style="left:2.85px;top:364.72px;font-size:12.5px;letter-spacing:0.000px;color:#262626;">19</div>
<div class="t" style="left:2.85px;top:384.72px;font-size:12.5px;letter-spacing:0.000px;color:#262626;">20</div>
<div class="t" style="left:2.85px;top:404.72px;font-size:12.5px;letter-spacing:0.000px;color:#262626;">21</div>
<div class="t" style="left:2.85px;top:424.72px;font-size:12.5px;letter-spacing:0.000px;color:#262626;">22</div>
<div class="t" style="left:2.85px;top:444.72px;font-size:12.5px;letter-spacing:0.000px;color:#262626;">23</div>
</div>
<div style="position:absolute;left:21px;top:284px;width:2px;height:19px;background:#217346;"></div>
<div style="position:absolute;left:599px;top:224px;width:1px;height:451px;background:#fff;"></div>
<div style="position:absolute;left:599px;top:224px;width:1px;height:451px;background:repeating-linear-gradient(to bottom,#7a7a7a 0 4.6px,transparent 4.6px 8.05px);background-position:0 1px;"></div>
<div style="position:absolute;left:23px;top:224px;width:147px;height:96px;background:#2f5496;"></div>
<svg style="position:absolute;left:74px;top:232px;" width="44" height="52" viewBox="0 0 44 52"><defs><linearGradient id="og" x1="0" y1="0" x2="0" y2="1"><stop offset="0" stop-color="#d43a2c"/><stop offset="1" stop-color="#f7a01c"/></linearGradient></defs>
<path d="M5 5 L21.5 12.6 L39 5 V31.6 L34.5 34.5 V40 L21.5 46.7 L9.3 40 V34.5 L5 31.6 Z" fill="#eef1f8"/>
<path d="M9.3 14 L21.5 20.8 L34.5 14 V33.7 L21.5 40.2 L9.3 33.7 Z" fill="url(#og)"/></svg>
<div class="t" style="left:39.5px;top:282.04px;font-size:27px;font-weight:bold;letter-spacing:3.4px;color:#e9eef7;transform:scaleX(0.8);transform-origin:0 0;">Malavida</div>
<div style="position:absolute;left:215px;top:264px;width:461px;height:19px;background:#d9e1f2;"></div>
<div style="position:absolute;left:214px;top:243px;width:1px;height:61px;background:#66778f;"></div>
<div style="position:absolute;left:291px;top:243px;width:1px;height:61px;background:#66778f;"></div>
<div style="position:absolute;left:368px;top:243px;width:1px;height:61px;background:#66778f;"></div>
<div style="position:absolute;left:445px;top:243px;width:1px;height:61px;background:#66778f;"></div>
<div style="position:absolute;left:522px;top:243px;width:1px;height:61px;background:#66778f;"></div>
<div style="position:absolute;left:599px;top:243px;width:1px;height:61px;background:#66778f;"></div>
<div style="position:absolute;left:676px;top:243px;width:1px;height:61px;background:#66778f;"></div>
<div style="position:absolute;left:214px;top:243px;width:463px;height:1px;background:#66778f;"></div>
<div style="position:absolute;left:214px;top:262px;width:463px;height:2px;background:#5b76b0;"></div>
<div style="position:absolute;left:214px;top:283px;width:463px;height:1px;background:#66778f;"></div>
<div style="position:absolute;left:214px;top:303px;width:463px;height:1px;background:#66778f;"></div>
<div class="t" style="left:217.60px;top:248.20px;font-size:13px;letter-spacing:-0.202px;color:#111;font-weight:bold;">Column1</div>
<div style="position:absolute;left:274px;top:245px;width:17px;height:17px;background:linear-gradient(#fff,#f0f0f0);border:1px solid #c9c9c9;box-sizing:border-box;"></div>
<svg style="position:absolute;left:278px;top:252px;" width="9" height="5" viewBox="0 0 9 5"><path d="M0.5 0.5 H8.5 L4.5 4.5 Z" fill="#6d6d6d"/></svg>
<div class="t" style="left:273.98px;top:268.27px;font-size:13.5px;letter-spacing:0.000px;color:#111;">12</div>
<div class="t" style="left:281.49px;top:288.17px;font-size:13.5px;letter-spacing:0.000px;color:#111;">2</div>
<div class="t" style="left:294.60px;top:248.20px;font-size:13px;letter-spacing:-0.202px;color:#111;font-weight:bold;">Column2</div>
<div style="position:absolute;left:351px;top:245px;width:17px;height:17px;background:linear-gradient(#fff,#f0f0f0);border:1px solid #c9c9c9;box-sizing:border-box;"></div>
<svg style="position:absolute;left:355px;top:252px;" width="9" height="5" viewBox="0 0 9 5"><path d="M0.5 0.5 H8.5 L4.5 4.5 Z" fill="#6d6d6d"/></svg>
<div class="t" style="left:358.49px;top:268.27px;font-size:13.5px;letter-spacing:0.000px;color:#111;">4</div>
<div class="t" style="left:350.98px;top:288.17px;font-size:13.5px;letter-spacing:0.000px;color:#111;">12</div>
<div class="t" style="left:371.60px;top:248.20px;font-size:13px;letter-spacing:-0.202px;color:#111;font-weight:bold;">Column3</div>
<div style="position:absolute;left:428px;top:245px;width:17px;height:17px;background:linear-gradient(#fff,#f0f0f0);border:1px solid #c9c9c9;box-sizing:border-box;"></div>
<svg style="position:absolute;left:432px;top:252px;" width="9" height="5" viewBox="0 0 9 5"><path d="M0.5 0.5 H8.5 L4.5 4.5 Z" fill="#6d6d6d"/></svg>
<div class="t" style="left:435.49px;top:268.27px;font-size:13.5px;letter-spacing:0.000px;color:#111;">5</div>
<div class="t" style="left:427.98px;top:288.17px;font-size:13.5px;letter-spacing:0.000px;color:#111;">14</div>
<div class="t" style="left:448.60px;top:248.20px;font-size:13px;letter-spacing:-0.202px;color:#111;font-weight:bold;">Column4</div>
<div style="position:absolute;left:505px;top:245px;width:17px;height:17px;background:linear-gradient(#fff,#f0f0f0);border:1px solid #c9c9c9;box-sizing:border-box;"></div>
<svg style="position:absolute;left:509px;top:252px;" width="9" height="5" viewBox="0 0 9 5"><path d="M0.5 0.5 H8.5 L4.5 4.5 Z" fill="#6d6d6d"/></svg>
<div class="t" style="left:504.98px;top:268.27px;font-size:13.5px;letter-spacing:0.000px;color:#111;">12</div>
<div class="t" style="left:512.49px;top:288.17px;font-size:13.5px;letter-spacing:0.000px;color:#111;">5</div>
<div class="t" style="left:525.60px;top:248.20px;font-size:13px;letter-spacing:-0.202px;color:#111;font-weight:bold;">Column5</div>
<div style="position:absolute;left:582px;top:245px;width:17px;height:17px;background:linear-gradient(#fff,#f0f0f0);border:1px solid #c9c9c9;box-sizing:border-box;"></div>
<svg style="position:absolute;left:586px;top:252px;" width="9" height="5" viewBox="0 0 9 5"><path d="M0.5 0.5 H8.5 L4.5 4.5 Z" fill="#6d6d6d"/></svg>
<div class="t" style="left:589.49px;top:268.27px;font-size:13.5px;letter-spacing:0.000px;color:#111;">6</div>
<div class="t" style="left:589.49px;top:288.17px;font-size:13.5px;letter-spacing:0.000px;color:#111;">4</div>
<div class="t" style="left:602.60px;top:248.20px;font-size:13px;letter-spacing:-0.202px;color:#111;font-weight:bold;">Column6</div>
<div style="position:absolute;left:659px;top:245px;width:17px;height:17px;background:linear-gradient(#fff,#f0f0f0);border:1px solid #c9c9c9;box-sizing:border-box;"></div>
<svg style="position:absolute;left:663px;top:252px;" width="9" height="5" viewBox="0 0 9 5"><path d="M0.5 0.5 H8.5 L4.5 4.5 Z" fill="#6d6d6d"/></svg>
<div class="t" style="left:659.99px;top:268.27px;font-size:13.5px;letter-spacing:0.000px;color:#111;">11</div>
<div class="t" style="left:658.98px;top:288.17px;font-size:13.5px;letter-spacing:0.000px;color:#111;">10</div>
<div style="position:absolute;left:673px;top:300px;width:4px;height:4px;background:#4a67a8;"></div>
<div style="position:absolute;left:739px;top:282px;width:67px;height:23px;border:2px solid #21684a;box-sizing:border-box;"></div>
<div style="position:absolute;left:801px;top:300px;width:7px;height:7px;background:#21684a;border:1px solid #fff;box-sizing:border-box;"></div>
<div style="position:absolute;left:1000px;top:203px;width:21px;height:473px;background:#e6e6e6;"></div>
<div style="position:absolute;left:1003px;top:206px;width:15px;height:15px;background:#fff;border:1px solid #c6c6c6;box-sizing:border-box;"></div>
<svg style="position:absolute;left:1006px;top:211px;" width="9" height="5" viewBox="0 0 9 5"><path d="M0.5 4.5 L4.5 0.5 L8.5 4.5 Z" fill="#606060"/></svg>
<div style="position:absolute;left:1003px;top:221px;width:15px;height:420px;background:#fff;border:1px solid #c6c6c6;box-sizing:border-box;"></div>
<div style="position:absolute;left:1003px;top:641px;width:15px;height:21px;background:#d6d6d6;"></div>
<div style="position:absolute;left:1003px;top:661px;width:15px;height:15px;background:#fff;border:1px solid #c6c6c6;box-sizing:border-box;"></div>
<svg style="position:absolute;left:1006px;top:666px;" width="9" height="5" viewBox="0 0 9 5"><path d="M0.5 0.5 L4.5 4.5 L8.5 0.5 Z" fill="#606060"/></svg>
<div style="position:absolute;left:0px;top:676px;width:1021px;height:27px;background:#e6e6e6;"></div>
<div style="position:absolute;left:0px;top:703px;width:1021px;height:1px;background:#d0d0d0;"></div>
<svg style="position:absolute;left:22px;top:684px;" width="8" height="9" viewBox="0 0 8 9"><path d="M6 0.5 V8 L1.5 4.2 Z" fill="#b8b8b8"/></svg>
<svg style="position:absolute;left:51px;top:684px;" width="8" height="9" viewBox="0 0 8 9"><path d="M1.5 0.5 V8 L6 4.2 Z" fill="#b8b8b8"/></svg>
<div style="position:absolute;left:97px;top:675px;width:65px;height:25px;background:#fff;border-left:1px solid #aaa;border-right:1px solid #aaa;box-sizing:border-box;"></div>
<div style="position:absolute;left:97px;top:698px;width:65px;height:2px;background:#1f6b42;"></div>
<div class="t" style="left:109.60px;top:682.84px;font-size:12px;letter-spacing:-0.070px;color:#1f6b42;font-weight:bold;">Sheet1</div>
<svg style="position:absolute;left:194px;top:680px;" width="18" height="18" viewBox="0 0 18 18"><circle cx="9" cy="9" r="7.7" fill="none" stroke="#777" stroke-width="1.3"/><path d="M9 5 V13 M5 9 H13" stroke="#666" stroke-width="1.6"/></svg>
<div style="position:absolute;left:611px;top:685px;width:2px;height:2px;background:#a8a8a8;"></div>
<div style="position:absolute;left:611px;top:689px;width:2px;height:2px;background:#a8a8a8;"></div>
<div style="position:absolute;left:611px;top:693px;width:2px;height:2px;background:#a8a8a8;"></div>
<div style="position:absolute;left:628px;top:682px;width:15px;height:15px;background:#fff;border:1px solid #c6c6c6;box-sizing:border-box;"></div>
<svg style="position:absolute;left:632px;top:685px;" width="6" height="9" viewBox="0 0 6 9"><path d="M5 0.5 V8.5 L1 4.5 Z" fill="#606060"/></svg>
<div style="position:absolute;left:643px;top:682px;width:317px;height:15px;background:#fff;border:1px solid #c6c6c6;box-sizing:border-box;"></div>
<div style="position:absolute;left:960px;top:682px;width:25px;height:15px;background:#d6d6d6;"></div>
<div style="position:absolute;left:985px;top:682px;width:15px;height:15px;background:#fff;border:1px solid #c6c6c6;box-sizing:border-box;"></div>
<svg style="position:absolute;left:990px;top:685px;" width="6" height="9" viewBox="0 0 6 9"><path d="M1 0.5 V8.5 L5 4.5 Z" fill="#606060"/></svg>
<div style="position:absolute;left:0px;top:704px;width:1021px;height:20px;background:#f3f2f1;"></div>
<div class="t" style="left:5.60px;top:707.52px;font-size:11.2px;letter-spacing:-0.585px;color:#444;">Ready</div>
<div style="position:absolute;left:736px;top:704px;width:37px;height:20px;background:#c8c6c4;"></div>
<svg style="position:absolute;left:746px;top:706px;" width="15" height="15" viewBox="0 0 15 15"><g fill="none" stroke="#555" stroke-width="1"><rect x="1.5" y="1.5" width="12" height="12.5"/><path d="M1.5 5.6 H13.5 M1.5 9.8 H13.5 M5.5 1.5 V14 M9.5 1.5 V14"/></g></svg>
<svg style="position:absolute;left:784px;top:706px;" width="16" height="15" viewBox="0 0 16 15"><g fill="none" stroke="#555" stroke-width="1"><rect x="1.5" y="1.5" width="13" height="12.5"/><rect x="4.5" y="3.5" width="7" height="8.5"/><path d="M6 5.5 H10 M6 7.7 H10 M6 9.9 H10"/></g></svg>
<svg style="position:absolute;left:822px;top:706px;" width="16" height="15" viewBox="0 0 16 15"><g fill="none" stroke="#555" stroke-width="1"><rect x="1.5" y="1.5" width="13" height="12.5"/><path d="M2 9 H9 V1.5 M5.5 1.5 V9"/></g></svg>
<div style="position:absolute;left:854px;top:713px;width:6px;height:2px;background:#444;"></div>
<div style="position:absolute;left:864px;top:714px;width:99px;height:1px;background:#9a9a9a;"></div>
<div style="position:absolute;left:912px;top:708px;width:5px;height:11px;background:#666;"></div>
<svg style="position:absolute;left:967px;top:709px;" width="9" height="9" viewBox="0 0 9 9"><path d="M4.5 0.5 V8.5 M0.5 4.5 H8.5" stroke="#444" stroke-width="1.6"/></svg>
<div class="t" style="left:986.60px;top:707.57px;font-size:11.5px;letter-spacing:-1.038px;color:#444;">100%</div>
</body></html>
